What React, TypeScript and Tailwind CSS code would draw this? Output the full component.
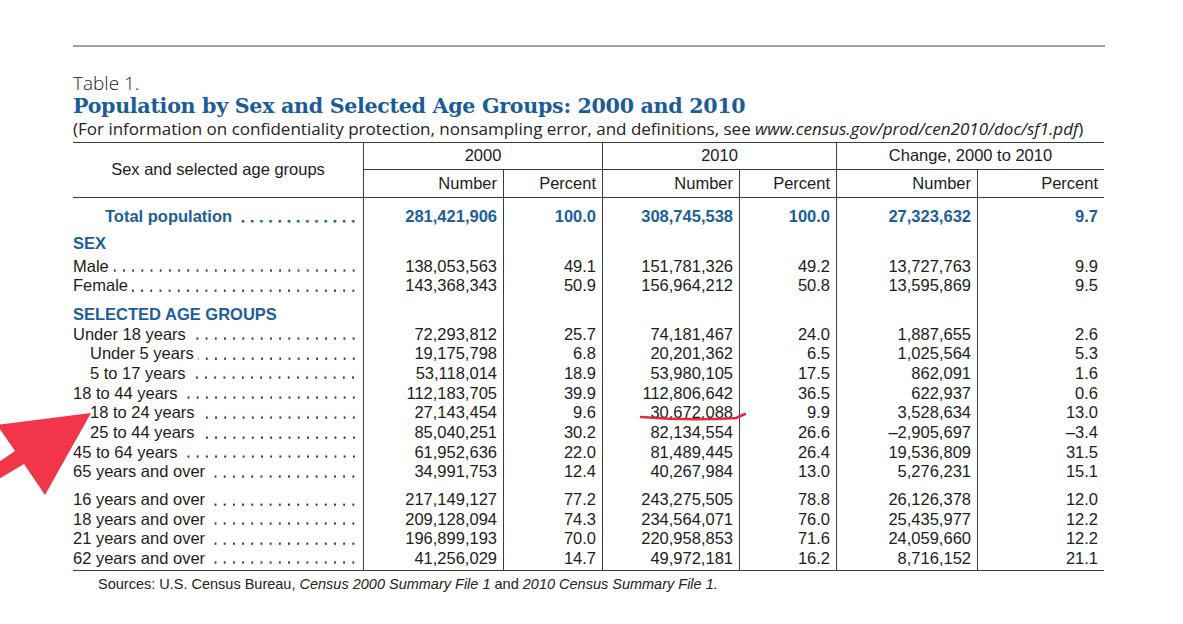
import React from "react";

type Row = {
  label: string;
  indent?: number;
  vals?: string[];
  kind?: "total" | "section" | "normal";
  h?: string;
  tight?: boolean;
};

const COLS = "grid grid-cols-[290px_140px_99px_137px_97px_141px_127px]";
const LINE = "border-[#3b3b3b]";

const rows: Row[] = [
  { label: "", h: "h-[9px]" },
  { label: "Total population", indent: 32, kind: "total", vals: ["281,421,906", "100.0", "308,745,538", "100.0", "27,323,632", "9.7"], h: "h-[19.6px]" },
  { label: "", h: "h-[7px]" },
  { label: "SEX", kind: "section", h: "h-[20px]" },
  { label: "", h: "h-[3px]" },
  { label: "Male", vals: ["138,053,563", "49.1", "151,781,326", "49.2", "13,727,763", "9.9"], h: "h-[19.6px]", tight: true },
  { label: "Female", vals: ["143,368,343", "50.9", "156,964,212", "50.8", "13,595,869", "9.5"], h: "h-[19.6px]", tight: true },
  { label: "", h: "h-[8.8px]" },
  { label: "SELECTED AGE GROUPS", kind: "section", h: "h-[20px]" },
  { label: "Under 18 years", vals: ["72,293,812", "25.7", "74,181,467", "24.0", "1,887,655", "2.6"], h: "h-[19.7px]" },
  { label: "Under 5 years", indent: 17, vals: ["19,175,798", "6.8", "20,201,362", "6.5", "1,025,564", "5.3"], h: "h-[19.7px]" },
  { label: "5 to 17 years", indent: 17, vals: ["53,118,014", "18.9", "53,980,105", "17.5", "862,091", "1.6"], h: "h-[19.7px]" },
  { label: "18 to 44 years", vals: ["112,183,705", "39.9", "112,806,642", "36.5", "622,937", "0.6"], h: "h-[19.7px]" },
  { label: "18 to 24 years", indent: 17, vals: ["27,143,454", "9.6", "30,672,088", "9.9", "3,528,634", "13.0"], h: "h-[19.7px]" },
  { label: "25 to 44 years", indent: 17, vals: ["85,040,251", "30.2", "82,134,554", "26.6", "\u20132,905,697", "\u20133.4"], h: "h-[19.7px]" },
  { label: "45 to 64 years", vals: ["61,952,636", "22.0", "81,489,445", "26.4", "19,536,809", "31.5"], h: "h-[19.7px]" },
  { label: "65 years and over", vals: ["34,991,753", "12.4", "40,267,984", "13.0", "5,276,231", "15.1"], h: "h-[19.7px]" },
  { label: "", h: "h-[8px]" },
  { label: "16 years and over", vals: ["217,149,127", "77.2", "243,275,505", "78.8", "26,126,378", "12.0"], h: "h-[19.6px]" },
  { label: "18 years and over", vals: ["209,128,094", "74.3", "234,564,071", "76.0", "25,435,977", "12.2"], h: "h-[19.6px]" },
  { label: "21 years and over", vals: ["196,899,193", "70.0", "220,958,853", "71.6", "24,059,660", "12.2"], h: "h-[19.6px]" },
  { label: "62 years and over", vals: ["41,256,029", "14.7", "49,972,181", "16.2", "8,716,152", "21.1"], h: "h-[19.6px]" },
  { label: "", h: "h-[2px]" },
];

function BodyRow({ r }: { r: Row }) {
  const isTotal = r.kind === "total";
  const isSection = r.kind === "section";
  const valCls = isTotal ? "font-bold text-[#1d5e99]" : "text-[#1c1c1c]";
  return (
    <div className={`${COLS} ${r.h}`}>
      <div className="flex items-stretch pr-[5px]" style={{ paddingLeft: r.indent ?? 0 }}>
        {r.label && (
          <>
            <span className={`flex items-center whitespace-nowrap ${isTotal || isSection ? "font-bold text-[#1d5e99]" : "text-[#1c1c1c]"}`}>{r.label}</span>
            {!isSection && (
              <span
                className={`flex-1 bg-repeat-x bg-right bg-[length:9.2px_100%] ${r.tight ? "ml-[1px]" : "ml-[4px]"} ${
                  isTotal
                    ? "bg-[radial-gradient(circle_at_50%_14.2px,#1d5e99_1.2px,transparent_1.7px)]"
                    : "bg-[radial-gradient(circle_at_50%_14.6px,#333_0.9px,transparent_1.4px)]"
                }`}
              />
            )}
          </>
        )}
      </div>
      {[0, 1, 2, 3, 4, 5].map((i) => (
        <div key={i} className={`border-l ${LINE} flex items-center justify-end pr-[6px] whitespace-nowrap ${valCls}`}>
          {r.vals ? r.vals[i] : ""}
        </div>
      ))}
    </div>
  );
}

export default function App() {
  return (
    <div className="relative w-[1183px] h-[624px] bg-white overflow-hidden">
      <div className="pt-[45px] pl-[73px]">
        <div className="w-[1032px] h-[1.5px] bg-[#a6a1a1]" />
        <div className="mt-[26px] h-[22px] flex items-center text-[19px] leading-none text-[#222] font-['Open_Sans',sans-serif] font-light">Table 1.</div>
        <div className="h-[23px] flex items-center text-[20.6px] leading-none font-bold text-[#1b5c97] font-['DejaVu_Serif',serif] tracking-[-0.3px] whitespace-nowrap">
          Population by Sex and Selected Age Groups: 2000 and 2010
        </div>
        <div className="h-[22px] flex items-center text-[17px] leading-none text-[#222] font-['Open_Sans',sans-serif] whitespace-nowrap">
          (For information on confidentiality protection, nonsampling error, and definitions, see&nbsp;<i>www.census.gov/prod/cen2010/doc/sf1.pdf</i>)
        </div>
        <div className="mt-[2px] w-[1031px] font-['Liberation_Sans',Arial,sans-serif] text-[16.5px] leading-none">
          <div className={`${COLS} grid-rows-[27px_27px] border-t border-b ${LINE} text-[#1c1c1c]`}>
            <div className="row-span-2 flex items-center justify-center">Sex and selected age groups</div>
            <div className={`col-span-2 border-l border-b ${LINE} flex items-center justify-center`}>2000</div>
            <div className={`col-span-2 border-l border-b ${LINE} flex items-center justify-center`}>2010</div>
            <div className={`col-span-2 border-l border-b ${LINE} flex items-center justify-center`}>Change, 2000 to 2010</div>
            {["Number", "Percent", "Number", "Percent", "Number", "Percent"].map((t, i) => (
              <div key={i} className={`border-l ${LINE} flex items-center justify-end pr-[6px]`}>{t}</div>
            ))}
          </div>
          <div className={`border-b ${LINE}`}>
            {rows.map((r, i) => (
              <BodyRow key={i} r={r} />
            ))}
          </div>
        </div>
        <div className="mt-[3px] pl-[25px] text-[14.5px] text-[#222] font-['Liberation_Sans',Arial,sans-serif]">
          Sources: U.S. Census Bureau, <i>Census 2000 Summary File 1</i> and <i>2010 Census Summary File 1.</i>
        </div>
      </div>

      <svg className="absolute left-0 top-0 pointer-events-none" width="1183" height="624" viewBox="0 0 1183 624">
        <polygon points="91,413 45,495 24,464 -20,490 -20,475 15,451 -3,425" fill="#f2364a" />
        <path d="M641 417 Q 690 421 736 418 L 745 414" stroke="#e52a3c" strokeWidth="2.5" fill="none" strokeLinecap="round" />
      </svg>
    </div>
  );
}
